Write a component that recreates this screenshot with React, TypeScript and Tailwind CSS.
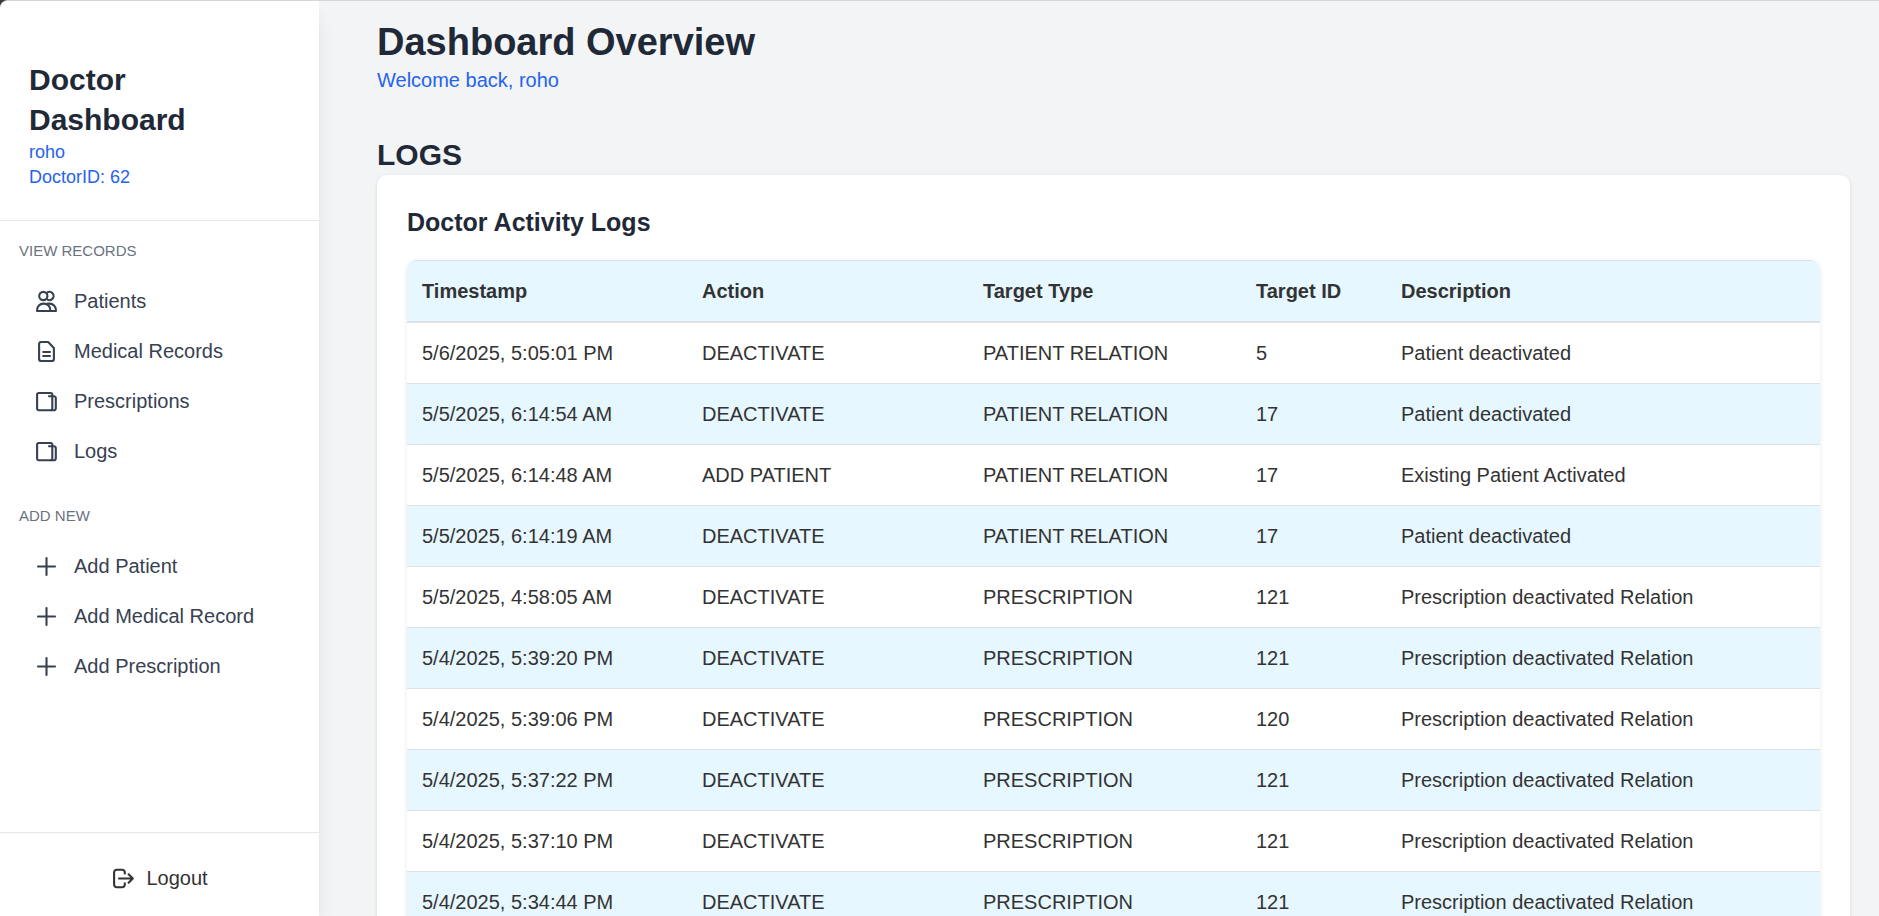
import type { ReactNode } from 'react';

function Icon({ children }: { children: ReactNode }) {
  return (
    <svg
      viewBox="0 0 25 25"
      className="size-[25px] shrink-0"
      fill="none"
      stroke="currentColor"
      strokeWidth="2.1"
      strokeLinecap="round"
      strokeLinejoin="round"
      aria-hidden="true"
    >
      {children}
    </svg>
  );
}

const PatientsIcon = () => (
  <Icon>
    <circle cx="9.3" cy="7" r="4.1" />
    <path d="M12.9 3.8a4.1 4.1 0 1 1 0 6.4" />
    <path d="M3.1 22v-1.2a6.2 6.2 0 0 1 6.2-6.2h0.8a6.2 6.2 0 0 1 6.2 6.2v1.2z" />
    <path d="M13.8 14.6h1.9a6.2 6.2 0 0 1 6.2 6.2v1.2h-5.6" />
  </Icon>
);

const DocumentIcon = () => (
  <Icon>
    <path d="M14.2 3H7.2a2.1 2.1 0 0 0-2.1 2.1v14.8a2.1 2.1 0 0 0 2.1 2.1h10.6a2.1 2.1 0 0 0 2.1-2.1V9z" />
    <path d="M9.2 13h6.8M9.2 17h6.8" />
  </Icon>
);

const PagesIcon = () => (
  <Icon>
    <rect x="3.1" y="4" width="15.2" height="17.2" rx="1.6" />
    <path d="M15 7.2h5a1.8 1.8 0 0 1 1.8 1.8v10.4a1.8 1.8 0 0 1-1.8 1.8h-3" />
  </Icon>
);

const PlusIcon = () => (
  <Icon>
    <path d="M12.5 4v17M4 12.5h17" />
  </Icon>
);

const LogoutIcon = () => (
  <Icon>
    <path d="M13.8 7.6V6.4a2.6 2.6 0 0 0-2.6-2.6H5.7a2.6 2.6 0 0 0-2.6 2.6v12.2a2.6 2.6 0 0 0 2.6 2.6h5.5a2.6 2.6 0 0 0 2.6-2.6v-1.2" />
    <path d="M8 12.5h13.6M17.6 8.3l4.2 4.2-4.2 4.2" />
  </Icon>
);

const sections = [
  {
    title: 'VIEW RECORDS',
    items: [
      { label: 'Patients', icon: <PatientsIcon /> },
      { label: 'Medical Records', icon: <DocumentIcon /> },
      { label: 'Prescriptions', icon: <PagesIcon /> },
      { label: 'Logs', icon: <PagesIcon /> },
    ],
  },
  {
    title: 'ADD NEW',
    items: [
      { label: 'Add Patient', icon: <PlusIcon /> },
      { label: 'Add Medical Record', icon: <PlusIcon /> },
      { label: 'Add Prescription', icon: <PlusIcon /> },
    ],
  },
];

const columns = ['Timestamp', 'Action', 'Target Type', 'Target ID', 'Description'];

const logs = [
  ['5/6/2025, 5:05:01 PM', 'DEACTIVATE', 'PATIENT RELATION', '5', 'Patient deactivated'],
  ['5/5/2025, 6:14:54 AM', 'DEACTIVATE', 'PATIENT RELATION', '17', 'Patient deactivated'],
  ['5/5/2025, 6:14:48 AM', 'ADD PATIENT', 'PATIENT RELATION', '17', 'Existing Patient Activated'],
  ['5/5/2025, 6:14:19 AM', 'DEACTIVATE', 'PATIENT RELATION', '17', 'Patient deactivated'],
  ['5/5/2025, 4:58:05 AM', 'DEACTIVATE', 'PRESCRIPTION', '121', 'Prescription deactivated Relation'],
  ['5/4/2025, 5:39:20 PM', 'DEACTIVATE', 'PRESCRIPTION', '121', 'Prescription deactivated Relation'],
  ['5/4/2025, 5:39:06 PM', 'DEACTIVATE', 'PRESCRIPTION', '120', 'Prescription deactivated Relation'],
  ['5/4/2025, 5:37:22 PM', 'DEACTIVATE', 'PRESCRIPTION', '121', 'Prescription deactivated Relation'],
  ['5/4/2025, 5:37:10 PM', 'DEACTIVATE', 'PRESCRIPTION', '121', 'Prescription deactivated Relation'],
  ['5/4/2025, 5:34:44 PM', 'DEACTIVATE', 'PRESCRIPTION', '121', 'Prescription deactivated Relation'],
];

function Sidebar() {
  return (
    <aside className="relative z-10 flex w-[319px] shrink-0 flex-col bg-white shadow-[0_12px_19px_-4px_rgba(0,0,0,0.1),0_5px_8px_-5px_rgba(0,0,0,0.1)]">
      <div className="border-b border-gray-200 px-[29px] pt-[59px] pb-[30px]">
        <h2 className="w-min text-[30px] leading-10 font-bold text-[#1f2937]">Doctor Dashboard</h2>
        <p className="text-[18px] leading-[25px] text-[#2563eb]">roho</p>
        <p className="text-[18px] leading-[25px] text-[#2563eb]">DoctorID: 62</p>
      </div>
      <nav className="flex flex-1 flex-col gap-[30px] px-[19px] pt-5">
        {sections.map((section) => (
          <section key={section.title}>
            <h3 className="mb-[15px] text-[15px] leading-5 text-[#6b7280]">{section.title}</h3>
            <ul>
              {section.items.map((item) => (
                <li key={item.label}>
                  <a href="#" className="flex h-[50px] items-center gap-[15px] px-[15px] text-xl text-[#374151]">
                    {item.icon}
                    {item.label}
                  </a>
                </li>
              ))}
            </ul>
          </section>
        ))}
      </nav>
      <div className="border-t border-gray-200 px-5 pt-5 pb-[13px]">
        <button type="button" className="flex h-[50px] w-full items-center justify-center gap-[10px] text-xl text-[#333333]">
          <LogoutIcon />
          Logout
        </button>
      </div>
    </aside>
  );
}

function ActivityLogs() {
  return (
    <div className="rounded-[10px] bg-white p-[30px] shadow-[0_1px_4px_rgba(0,0,0,0.1)]">
      <h3 className="mb-5 text-[25px] leading-[35px] font-bold text-[#1f2937]">Doctor Activity Logs</h3>
      <div className="overflow-hidden rounded-[10px] shadow-[0_1px_4px_rgba(0,0,0,0.1)]">
        <table className="w-full table-fixed border-separate border-spacing-0 text-left text-xl leading-[30px] text-[#333333]">
          <colgroup>
            <col className="w-[280px]" />
            <col className="w-[281px]" />
            <col className="w-[273px]" />
            <col className="w-[145px]" />
            <col />
          </colgroup>
          <thead className="bg-[#e6f7ff]">
            <tr>
              {columns.map((name) => (
                <th key={name} scope="col" className="border-t border-b-2 border-[#dee2e6] p-[15px] font-bold">
                  {name}
                </th>
              ))}
            </tr>
          </thead>
          <tbody>
            {logs.map((row) => (
              <tr key={row[0]} className="even:bg-[#e6f7ff]">
                {row.map((cell, i) => (
                  <td key={i} className="border-b border-[#dee2e6] p-[15px]">
                    {cell}
                  </td>
                ))}
              </tr>
            ))}
          </tbody>
        </table>
      </div>
    </div>
  );
}

export default function App() {
  return (
    <div className="bg-[#3a3a3a] font-['Liberation_Sans',Arial,sans-serif]">
      <div className="flex h-screen overflow-hidden rounded-tl-[8px] border-t border-[#d5d6d8] bg-[#f3f4f6]">
        <Sidebar />
        <main className="min-w-0 flex-1 overflow-y-auto pt-[19px] pr-[29px] pb-[30px] pl-[58px] [scrollbar-width:none]">
          <header className="mb-10">
            <h1 className="text-[38px] leading-[45px] font-bold text-[#1f2937]">Dashboard Overview</h1>
            <p className="text-xl leading-[30px] text-[#2563eb]">Welcome back, roho</p>
          </header>
          <h2 className="text-[30px] leading-10 font-bold text-[#1f2937]">LOGS</h2>
          <ActivityLogs />
        </main>
      </div>
    </div>
  );
}
